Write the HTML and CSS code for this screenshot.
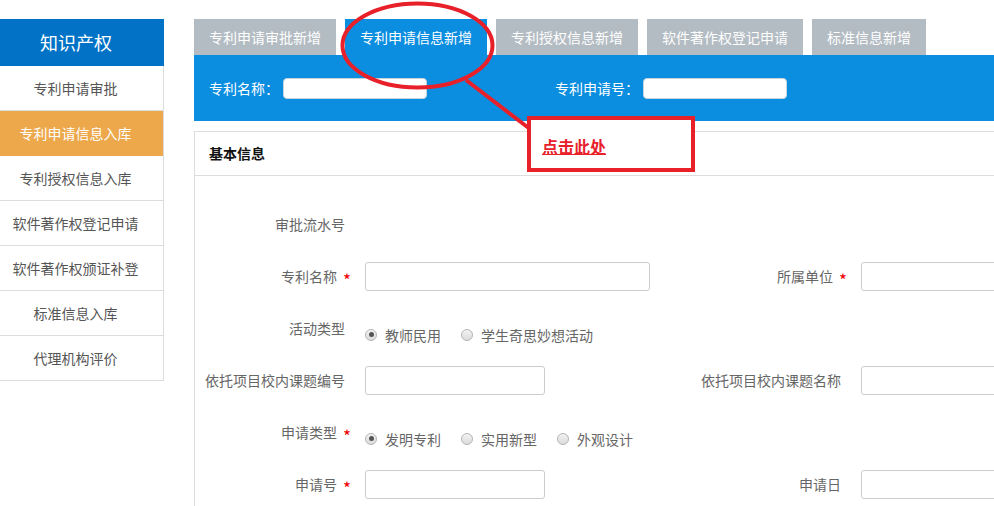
FILE: index.html
```html
<!DOCTYPE html>
<html>
<head>
    <meta charset="utf-8">
    <title>知识产权 - 专利申请信息新增</title>
    <link rel="stylesheet" href="styles.css">
</head>
<body>

<div class="page">
    <aside class="sidebar">
        <div class="sidebar-title">知识产权</div>
        <ul class="menu">
            <li><a href="#">专利申请审批</a></li>
            <li class="active"><a href="#">专利申请信息入库</a></li>
            <li><a href="#">专利授权信息入库</a></li>
            <li><a href="#">软件著作权登记申请</a></li>
            <li><a href="#">软件著作权颁证补登</a></li>
            <li><a href="#">标准信息入库</a></li>
            <li><a href="#">代理机构评价</a></li>
        </ul>
    </aside>

    <main class="main">
        <ul class="tabs">
            <li><a href="#">专利申请审批新增</a></li>
            <li class="active"><a href="#">专利申请信息新增</a></li>
            <li><a href="#">专利授权信息新增</a></li>
            <li><a href="#">软件著作权登记申请</a></li>
            <li><a href="#">标准信息新增</a></li>
        </ul>

        <div class="search-bar">
            <label class="search-item">专利名称：<input type="text" class="search-input"></label>
            <label class="search-item">专利申请号：<input type="text" class="search-input"></label>
        </div>

        <section class="panel">
            <div class="panel-head">基本信息</div>
            <form class="form-grid">
                <span class="field-label">审批流水号</span>
                <span class="field-value"></span>
                <span></span><span></span>

                <span class="field-label">专利名称<i class="req">*</i></span>
                <input type="text" class="field-input wide">
                <span class="field-label">所属单位<i class="req">*</i></span>
                <input type="text" class="field-input wide">

                <span class="field-label">活动类型</span>
                <div class="radio-group">
                    <label class="radio-item"><input type="radio" name="activity" class="radio" checked>教师民用</label>
                    <label class="radio-item"><input type="radio" name="activity" class="radio">学生奇思妙想活动</label>
                </div>

                <span class="field-label">依托项目校内课题编号</span>
                <input type="text" class="field-input">
                <span class="field-label">依托项目校内课题名称</span>
                <input type="text" class="field-input wide">

                <span class="field-label">申请类型<i class="req">*</i></span>
                <div class="radio-group">
                    <label class="radio-item"><input type="radio" name="kind" class="radio" checked>发明专利</label>
                    <label class="radio-item"><input type="radio" name="kind" class="radio">实用新型</label>
                    <label class="radio-item"><input type="radio" name="kind" class="radio">外观设计</label>
                </div>

                <span class="field-label">申请号<i class="req">*</i></span>
                <input type="text" class="field-input">
                <span class="field-label">申请日</span>
                <input type="text" class="field-input wide">
            </form>
        </section>
    </main>
</div>

<!-- hint marker around the active tab -->
<svg class="marker" width="994" height="506" viewBox="0 0 994 506">
    <ellipse cx="417.5" cy="45.5" rx="75" ry="42" fill="none" stroke="#e8202a" stroke-width="4"/>
    <line x1="466" y1="80" x2="530" y2="129" stroke="#e8202a" stroke-width="4"/>
</svg>
<div class="callout"><a href="#">点击此处</a></div>

</body>
</html>
```

FILE: styles.css
```css
html, body {
    overflow: hidden;
}
body {
    font-family: "Microsoft YaHei", "Noto Sans CJK SC", "Noto Sans", sans-serif;
    font-size: 14px;
    margin: 0;
    background-color: #fff;
    color: #666;
    position: relative;
    height: 506px;
}
ul {
    list-style: none;
    margin: 0;
    padding: 0;
}
a {
    text-decoration: none;
}
.page {
    display: flex;
    gap: 30px;
    padding-top: 19px;
}

/* left menu */
.sidebar {
    width: 164px;
    flex-shrink: 0;
}
.sidebar-title {
    height: 47px;
    line-height: 47px;
    padding-right: 12px;
    background-color: #0172c5;
    color: #fff;
    font-size: 18px;
    text-align: center;
}
.menu {
    border-right: 1px solid #ddd;
}
.menu li {
    border-bottom: 1px solid #ddd;
}
.menu a {
    display: block;
    height: 44px;
    line-height: 44px;
    padding-right: 12px;
    text-align: center;
    color: #555;
}
.menu li.active {
    background-color: #eca84b;
    border-bottom-color: #eca84b;
}
.menu li.active a {
    color: #fff;
}

/* right side */
.main {
    width: 1000px;
    flex-shrink: 0;
}
.tabs {
    display: flex;
    gap: 9px;
}
.tabs a {
    display: block;
    height: 36px;
    line-height: 36px;
    padding: 0 15px;
    background-color: #b3bcc3;
    color: #fff;
}
.tabs li.active a {
    background-color: #0c8ee0;
}
.search-bar {
    display: flex;
    align-items: center;
    gap: 128px;
    height: 66px;
    padding-left: 15px;
    background-color: #0c8ee0;
    color: #fff;
}
.search-item {
    display: flex;
    align-items: center;
    gap: 4px;
}
.search-input {
    width: 144px;
    height: 21px;
    box-sizing: border-box;
    border: 1px solid #c8d4dc;
    border-radius: 4px;
    background: #fff;
    padding: 0 6px;
}
.panel {
    margin-top: 10px;
    border: 1px solid #ddd;
    height: 400px;
}
.panel-head {
    height: 43px;
    line-height: 43px;
    padding-left: 14px;
    border-bottom: 1px solid #ddd;
    font-weight: bold;
    color: #111;
}
.form-grid {
    display: grid;
    grid-template-columns: 140px 316px 140px 300px;
    grid-auto-rows: 52px;
    column-gap: 20px;
    align-items: center;
    padding: 22px 0 0 10px;
}
.field-label {
    text-align: right;
    white-space: nowrap;
}
.req {
    font-style: normal;
    font-size: 17px;
    line-height: 14px;
    vertical-align: -5px;
    color: #e00;
    display: inline-block;
    width: 8px;
    margin-left: 6px;
    margin-right: -6px;
    text-align: left;
}
.field-input {
    width: 180px;
    height: 29px;
    box-sizing: border-box;
    border: 1px solid #ccc;
    border-radius: 3px;
    background: #fff;
}
.field-input.wide {
    width: 285px;
}
.radio-group {
    grid-column: 2 / 5;
    display: flex;
    gap: 20px;
    margin-top: 13px;
}
.radio-item {
    display: flex;
    align-items: center;
    gap: 8px;
    color: #666;
}
.radio {
    appearance: none;
    -webkit-appearance: none;
    margin: 0;
    width: 12px;
    height: 12px;
    border-radius: 50%;
    border: 1px solid #b5b5b5;
    background: linear-gradient(#f2f2f2, #dcdcdc);
    box-sizing: border-box;
    position: relative;
}
.radio:checked::after {
    content: "";
    position: absolute;
    left: 2.5px;
    top: 2.5px;
    width: 5px;
    height: 5px;
    border-radius: 50%;
    background: #555;
}

/* red hint marker */
.marker {
    position: absolute;
    left: 0;
    top: 0;
    pointer-events: none;
}
.callout {
    position: absolute;
    left: 527px;
    top: 116px;
    width: 160px;
    height: 48px;
    border: 4px solid #e8202a;
    background: #fff;
}
.callout a {
    position: absolute;
    left: 11px;
    top: 16px;
    font-size: 16px;
    line-height: 20px;
    font-weight: bold;
    color: #e8202a;
    text-decoration: underline;
}
```
